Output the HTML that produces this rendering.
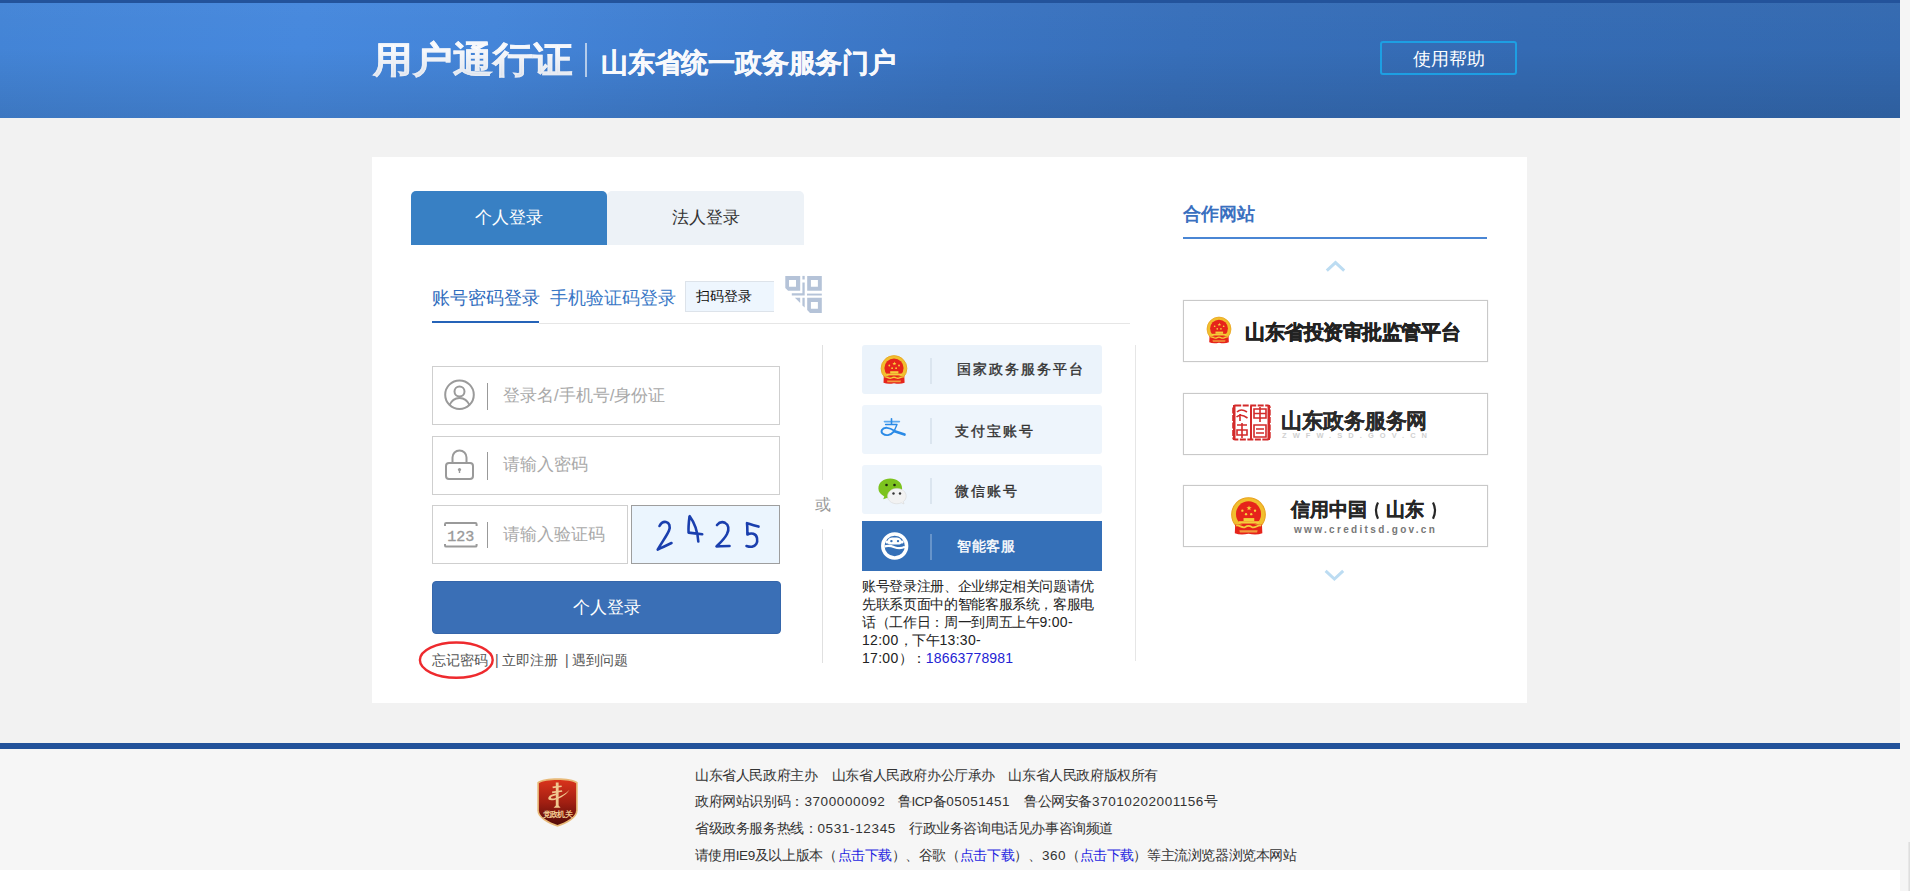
<!DOCTYPE html>
<html><head><meta charset="utf-8">
<style>
*{margin:0;padding:0;box-sizing:border-box}
html,body{width:1910px;height:891px;overflow:hidden;background:#f5f5f5;font-family:"Liberation Sans",sans-serif}
.abs{position:absolute}
#page{position:absolute;left:0;top:0;width:1900px;height:891px;background:#f2f2f2}
#hdr{position:absolute;left:0;top:0;width:1900px;height:118px;background:linear-gradient(to bottom,rgba(255,255,255,0.02),rgba(0,0,0,0.0) 40%,rgba(0,0,0,0.1)),linear-gradient(97deg,#4384d6 0%,#4688dd 16%,#4485d9 26%,#3e7bcc 40%,#3a74c2 50%,#376fba 62%,#346bb4 80%,#3369b0 100%)}
#hdrtop{position:absolute;left:0;top:0;width:1900px;height:3px;background:#23539b}
.t1{position:absolute;left:373px;top:34px;font-size:39.5px;transform-origin:0 50%;transform:scaleY(0.91);font-weight:bold;color:#eef2f8;background:linear-gradient(to bottom,#ffffff 25%,#d9e0ea 85%);-webkit-background-clip:text;background-clip:text;-webkit-text-fill-color:transparent;-webkit-text-stroke:0.7px rgba(238,242,248,0.6);line-height:50px;white-space:nowrap}
.sep{position:absolute;left:585px;top:43px;width:2px;height:34px;background:rgba(230,236,245,0.7)}
.t2{position:absolute;left:601px;top:46px;font-size:26.5px;letter-spacing:-0.2px;font-weight:bold;color:#f8f9fc;-webkit-text-stroke:0.35px #f8f9fc;line-height:34px;white-space:nowrap}
.help{position:absolute;left:1380px;top:41px;width:137px;height:34px;border:2px solid #1d9fe3;border-radius:3px;color:#fff;font-size:18px;line-height:32px;text-align:center}
#card{position:absolute;left:372px;top:157px;width:1155px;height:546px;background:#fff}
.tab{position:absolute;top:191px;height:54px;width:196px;border-radius:5px 5px 0 0;font-size:17px;line-height:54px;text-align:center}
.inp{position:absolute;left:432px;width:348px;border:1px solid #cfcfcf;background:#fff}
.lk{position:absolute;top:650px;font-size:14px;line-height:20px;color:#555;white-space:nowrap}
.vsep{position:absolute;left:487px;width:1px;background:#999}
.ph{position:absolute;left:503px;font-size:17px;line-height:24px;color:#a9a9a9;white-space:nowrap}
.tp{position:absolute;left:862px;width:240px;height:49px;background:#ebf3fb;border-radius:3px}
.tsep{position:absolute;left:68px;top:12.5px;width:2px;height:26px;background:#dbe5ef}
.tt{position:absolute;left:95px;top:14px;font-size:14px;line-height:20px;letter-spacing:2px;-webkit-text-stroke:0.4px;color:#333;white-space:nowrap}
.pbox{position:absolute;left:1183px;width:305px;height:62px;border:1px solid #c9c9c9;box-shadow:0 0 1px #dcdcdc;background:#fff}
.fs{position:absolute;font-size:13.5px;letter-spacing:-0.4px;line-height:20px;color:#333;white-space:nowrap}
.dg{letter-spacing:0.3px}
.fb{color:#1f1fe0}
#foot{position:absolute;left:0;top:743px;width:1900px;height:127px;background:#f6f6f6;border-top:6px solid #22529a}
#foot .ln{position:absolute;left:695px;font-size:13px;color:#333;white-space:nowrap;line-height:16px}
#bot{position:absolute;left:0;top:870px;width:1900px;height:21px;background:#fff}
</style></head><body>
<svg width="0" height="0" style="position:absolute"><defs>
<g id="emblem">
  <circle cx="18" cy="16.5" r="12.9" fill="#f1bf2e"/>
  <circle cx="18" cy="16.5" r="12.9" fill="none" stroke="#e9a21f" stroke-width="0.8"/>
  <circle cx="18" cy="16" r="9.6" fill="#e6241b"/>
  <path d="M18.4 9.6L18.9 11L20.4 11L19.2 11.9L19.6 13.3L18.4 12.5L17.2 13.3L17.6 11.9L16.4 11L17.9 11Z" fill="#f7d23a"/>
  <circle cx="13.3" cy="13.5" r="0.9" fill="#f7d23a"/><circle cx="23" cy="13.5" r="0.9" fill="#f7d23a"/>
  <circle cx="16.1" cy="16.2" r="0.9" fill="#f7d23a"/><circle cx="20.1" cy="16.2" r="0.9" fill="#f7d23a"/>
  <rect x="14.2" y="19.2" width="8.2" height="2.4" fill="#f4cd3a"/>
  <rect x="10.5" y="21.6" width="15.5" height="1.8" fill="#f4cd3a"/>
  <path d="M7.8 24.2H28.3L28.6 30.8Q24 32.6 18 31.2Q12 32.6 7.5 30.8Z" fill="#e6241b"/>
  <path d="M8.5 25C11 24 13 27.5 15.5 26C17 25 19 25 20.5 26C23 27.5 25 24 27.8 25" fill="none" stroke="#f4cd3a" stroke-width="1.4"/>
  <path d="M11 28.6H25L24.6 30.2H11.4Z" fill="#f19a3e"/>
</g>
</defs></svg>
<div id="page">
  <div id="hdr"></div>
  <div id="hdrtop"></div>
  <div class="t1">用户通行证</div>
  <div class="sep"></div>
  <div class="t2">山东省统一政务服务门户</div>
  <div class="help">使用帮助</div>

  <div id="card"></div>
  <div class="tab" style="left:411px;background:#3880c4;color:#fff">个人登录</div>
  <div class="tab" style="left:607px;width:197px;background:#edf2f7;color:#333">法人登录</div>


  <!-- subtabs -->
  <div class="abs" style="left:432px;top:285px;font-size:18px;line-height:26px;color:#2f6cbd;white-space:nowrap">账号密码登录</div>
  <div class="abs" style="left:550px;top:285px;font-size:18px;line-height:26px;color:#3a78c6;white-space:nowrap">手机验证码登录</div>
  <div class="abs" style="left:685px;top:281px;width:89px;height:31px;background:#eef6fe;border:1px solid #dde3ea;border-right:none;font-size:14px;line-height:29px;padding-left:10px;color:#111;white-space:nowrap">扫码登录</div>
  <svg class="abs" style="left:780px;top:270px" width="50" height="50" viewBox="0 0 50 50">
    <g fill="#b5c3d8">
      <path d="M5.3 5.9H20.2V20.8H8.1L5.3 18Z M9 10.1V16.8H16V10.1Z" fill-rule="evenodd"/>
      <path d="M27.2 5.9H41.8V20.8H27.2Z M30.9 10.1V16.8H37.9V10.1Z" fill-rule="evenodd"/>
      <rect x="22.4" y="5.9" width="2.3" height="3.6"/>
      <path d="M22.4 12.6H24.7V25.5H11.8V23.3H22.4Z"/>
      <rect x="27" y="23.6" width="14.8" height="1.9"/>
      <path d="M14.9 27.8H20.2V33.1Z"/>
      <path d="M22.4 27.8H24.7V37.6L22.4 35.5Z"/>
      <path d="M27.2 27.8H41.8V42.9H30L27.2 40Z M30.9 32V38.7H37.9V32Z" fill-rule="evenodd"/>
    </g>
  </svg>
  <div class="abs" style="left:432px;top:321px;width:107px;height:2px;background:#2563b8"></div>
  <div class="abs" style="left:539px;top:323px;width:591px;height:1px;background:#e6e6e6"></div>

  <!-- inputs -->
  <div class="inp" style="top:366px;height:59px"></div>
  <div class="inp" style="top:436px;height:59px"></div>
  <div class="inp" style="top:505px;width:196px;height:59px"></div>
  <div class="vsep" style="top:383px;height:27px"></div>
  <div class="vsep" style="top:452px;height:28px"></div>
  <div class="vsep" style="top:522px;height:26px"></div>
  <div class="ph" style="top:383.5px">登录名/手机号/身份证</div>
  <div class="ph" style="top:453px">请输入密码</div>
  <div class="ph" style="top:522.5px">请输入验证码</div>
  <svg class="abs" style="left:442px;top:377px" width="36" height="36" viewBox="0 0 36 36">
    <circle cx="17.5" cy="17.7" r="14.3" fill="none" stroke="#9a9a9a" stroke-width="2"/>
    <circle cx="17.5" cy="14.6" r="5" fill="none" stroke="#9a9a9a" stroke-width="2"/>
    <path d="M7.6 28.2C9.5 23.5 13 21 17.5 21C22 21 25.5 23.5 27.4 28.2" fill="none" stroke="#9a9a9a" stroke-width="2"/>
  </svg>
  <svg class="abs" style="left:442px;top:446px" width="36" height="36" viewBox="0 0 36 36">
    <path d="M10.5 17V11.5C10.5 7.3 13.6 4.6 17.5 4.6C21.4 4.6 24.5 7.3 24.5 11.5V17" fill="none" stroke="#9a9a9a" stroke-width="2"/>
    <rect x="4" y="17" width="27" height="16" rx="3" fill="none" stroke="#9a9a9a" stroke-width="2"/>
    <circle cx="17.5" cy="23.6" r="1.6" fill="#9a9a9a"/>
    <rect x="16.8" y="24" width="1.4" height="3" fill="#9a9a9a"/>
  </svg>
  <svg class="abs" style="left:442px;top:520px" width="38" height="30" viewBox="0 0 38 30">
    <path d="M3 6V4.2Q3 3 4.2 3H33.4Q34.6 3 34.6 4.2V6" fill="none" stroke="#9a9a9a" stroke-width="2"/>
    <path d="M3 24V25.4Q3 26.6 4.2 26.6H33.4Q34.6 26.6 34.6 25.4V24" fill="none" stroke="#9a9a9a" stroke-width="2"/>
    <text x="18.8" y="20.6" text-anchor="middle" font-family="Liberation Mono" font-size="15" fill="#999" stroke="#999" stroke-width="0.35">123</text>
  </svg>
  <div class="abs" style="left:631px;top:505px;width:149px;height:59px;background:#ebf5fe;border:1px solid #9e9e9e"></div>
  <svg class="abs" style="left:631px;top:505px" width="149" height="59" viewBox="0 0 149 59">
    <g fill="none" stroke="#1a3fae" stroke-width="2.6" stroke-linecap="round" stroke-linejoin="round">
      <path d="M28.5 21C30 18 32.5 16.6 35 17C38.5 17.7 39.5 21.5 38 25.5C36 30.5 31 37 26.7 44.6C31 42.5 36 40 40.5 38"/>
      <path d="M58.5 11.5C57.7 18 57.3 23.5 57.6 27.6C62 28 66.5 28.6 71.2 29.3 M58.7 11.2C63 17 66.5 24 67.3 36.5"/>
      <path d="M86 20C88.5 17 91.5 16.7 94 17.8C97.5 19.5 98.5 24 96 29C93.5 34 89 38 85.5 41.4C90 41.2 94.5 41 98.5 41"/>
      <path d="M127.5 21.6C124 20.5 120 19.5 116 18.2C116.5 22.5 116.3 26 116.4 29.5C120.5 27.5 125 28.5 126 33C127 38 124.5 41 121 41.7C119 42 117 41.5 115.5 41"/>
    </g>
  </svg>
  <div class="abs" style="left:432px;top:581px;width:349px;height:53px;background:#3a6fb6;border:1px solid #3566ab;border-radius:4px;color:#fff;font-size:17px;line-height:51px;text-align:center">个人登录</div>
  <div class="lk" style="left:432px">忘记密码</div><div class="lk" style="left:495px">|</div><div class="lk" style="left:502px">立即注册</div><div class="lk" style="left:565px">|</div><div class="lk" style="left:572px">遇到问题</div>
  <svg class="abs" style="left:415px;top:638px" width="84" height="44" viewBox="0 0 84 44">
    <ellipse cx="41.3" cy="22.1" rx="36.4" ry="17.6" fill="none" stroke="#ee2a2e" stroke-width="2.4"/>
  </svg>

  <!-- middle column -->
  <div class="abs" style="left:822px;top:345px;width:1px;height:135px;background:#e0e0e0"></div>
  <div class="abs" style="left:822px;top:529px;width:1px;height:134px;background:#e0e0e0"></div>
  <div class="abs" style="left:815px;top:493.5px;font-size:16px;line-height:22px;color:#999">或</div>
  <div class="abs" style="left:1135px;top:345px;width:1px;height:316px;background:#e6e6e6"></div>

  <div class="tp" style="top:345px"><div class="tsep"></div><div class="tt">国家政务服务平台</div></div>
  <div class="tp" style="top:405px;background:#eef5fc"><div class="tsep"></div><div class="tt" style="left:93px;top:15.5px">支付宝账号</div></div>
  <div class="tp" style="top:465px;background:#eef5fc"><div class="tsep"></div><div class="tt" style="left:93px;top:15.5px">微信账号</div></div>
  <div class="tp" style="top:521px;background:#3570b8;border-radius:0;height:50px"><div class="tsep" style="background:rgba(255,255,255,0.25)"></div><div class="tt" style="color:#fff;letter-spacing:0.6px;top:15px">智能客服</div></div>

  <svg class="abs" style="left:876px;top:351.5px" width="36" height="36" viewBox="0 0 36 36"><use href="#emblem"/></svg>
  <svg class="abs" style="left:876px;top:412px" width="36" height="30" viewBox="0 0 36 30">
    <g fill="none" stroke="#2a8ae6" stroke-linecap="round" stroke-linejoin="round">
      <path d="M8.4 9.6H23.4" stroke="#5fabf0" stroke-width="1.6"/>
      <path d="M15.5 6.8V11.8" stroke-width="1.6"/>
      <path d="M9.6 12.5H21L18.3 18.8" stroke-width="1.4"/>
      <path d="M18.3 18.8C13.5 15.5 8 14.5 5.9 18C4.4 21 8 23.6 12 23.1C15 22.6 17 20.8 18.3 19.2" stroke-width="1.9"/>
      <path d="M18.6 19.2L28.5 22.6" stroke-width="2.6"/>
    </g>
  </svg>
  <svg class="abs" style="left:876px;top:472px" width="36" height="36" viewBox="0 0 36 36">
    <path d="M14.2 6.6C20.6 6.6 26.1 10.3 26.1 16.5C26.1 22.7 20.6 26.4 14.2 26.4C13 26.4 11.8 26.2 10.8 26L7.2 27.2L8.3 24.4C4.7 22.5 2.4 19.9 2.4 16.5C2.4 10.3 7.8 6.6 14.2 6.6Z" fill="#7cc31e"/>
    <circle cx="10.5" cy="13" r="1.3" fill="#1d2a10"/><circle cx="18.5" cy="13" r="1.3" fill="#1d2a10"/>
    <path d="M20.9 16.4C26 16.4 30.2 19.8 30.2 24.2C30.2 26.4 29.1 28.3 27.3 29.6L28 32L25.3 30.8C23.9 31.3 22.4 31.8 20.9 31.8C15.8 31.8 11.6 28.6 11.6 24.2C11.6 19.8 15.8 16.4 20.9 16.4Z" fill="#f2f2f2" stroke="#d8d8d8" stroke-width="0.6"/>
    <circle cx="17.5" cy="21.5" r="1.2" fill="#333"/><circle cx="24" cy="21.5" r="1.2" fill="#333"/>
  </svg>
  <svg class="abs" style="left:876px;top:528px" width="36" height="36" viewBox="0 0 36 36">
    <circle cx="18.7" cy="18" r="11.9" fill="none" stroke="#fff" stroke-width="3.5"/>
    <path d="M12 12.5C12 10 15 9.6 18.5 9.6C22 9.6 25 10 25 12.5C27 12.5 28 13 27.6 14.5C27.3 15.5 26 15.6 25 15.6C24.6 17 22 16.6 18.5 16.4C15 16.6 12.4 17 12 15.6C11 15.6 9.7 15.5 9.4 14.5C9 13 10 12.5 12 12.5Z" fill="#fff"/>
    <circle cx="15.4" cy="13.1" r="1.2" fill="#3570b8"/><circle cx="22" cy="13.1" r="1.2" fill="#3570b8"/>
    <path d="M8.5 18.5C12 17.2 15 17.8 18.5 19.2C22 20.5 25.5 20.6 29 18.8" fill="none" stroke="#fff" stroke-width="2.2"/>
  </svg>

  <div class="abs" style="left:862px;top:577px;width:250px;font-size:14px;line-height:18px;letter-spacing:-0.35px;color:#222">账号登录注册、企业绑定相关问题请优<br>先联系页面中的智能客服系统，客服电<br>话（工作日：周一到周五上午<span class="dg">9:00-</span><br><span class="dg">12:00</span>，下午<span class="dg">13:30-</span><br><span class="dg">17:00</span>）：<span class="dg" style="color:#2323d4;letter-spacing:0.15px">18663778981</span></div>

  <!-- right column -->
  <div class="abs" style="left:1183px;top:201px;font-size:18px;line-height:26px;font-weight:bold;color:#3a70bf;white-space:nowrap">合作网站</div>
  <div class="abs" style="left:1183px;top:237px;width:304px;height:2px;background:#4a86d4"></div>
  <svg class="abs" style="left:1310px;top:250px" width="50" height="30" viewBox="0 0 50 30"><polyline points="16.8,20.6 25.5,12.6 34.2,20.6" fill="none" stroke="#bcdcf2" stroke-width="3"/></svg>
  <svg class="abs" style="left:1310px;top:560px" width="50" height="30" viewBox="0 0 50 30"><polyline points="15.6,10.8 24.4,19 33.2,10.8" fill="none" stroke="#bcdcf2" stroke-width="3"/></svg>
  <div class="pbox" style="top:300px"></div>
  <div class="pbox" style="top:393px"></div>
  <div class="pbox" style="top:485px"></div>
  <svg class="abs" style="left:1201px;top:312px" width="36" height="36" viewBox="0 0 36 36"><g transform="translate(18 18) scale(0.93) translate(-18 -17.5)"><use href="#emblem"/></g></svg>
  <div class="abs" style="left:1245px;top:317px;font-size:20px;line-height:30px;font-weight:bold;-webkit-text-stroke:0.6px #222;color:#222;letter-spacing:-0.45px;white-space:nowrap">山东省投资审批监管平台</div>

  <svg class="abs" style="left:1232px;top:404px" width="40" height="37" viewBox="0 0 40 37">
    <g fill="none" stroke="#d32a2a" stroke-width="2">
      <rect x="1.2" y="1.4" width="36.5" height="34" rx="2" stroke-dasharray="6 1.5"/>
    </g>
    <g fill="#d32a2a">
      <rect x="1" y="1" width="2.5" height="35"/><rect x="35.5" y="1" width="2.5" height="35"/>
      <rect x="18" y="2" width="2" height="33"/>
    </g>
    <g fill="none" stroke="#d32a2a" stroke-width="1.6">
      <path d="M5 8Q9 4 15 8M4.5 13Q9 9 15.5 14M8 10V17"/>
      <path d="M5 21H15M10 19V34M5 26H15V31H5Z"/>
      <path d="M22 5H34V14H22ZM22 9.5H34M28 3V18"/>
      <path d="M22 21H34V33H22ZM24 25H32M24 29H32"/>
    </g>
  </svg>
  <div class="abs" style="left:1281px;top:405.5px;font-size:21px;line-height:30px;font-weight:bold;-webkit-text-stroke:0.2px #2a2a2a;color:#2a2a2a;letter-spacing:-0.1px;white-space:nowrap">山东政务服务网</div>
  <div class="abs" style="left:1282px;top:431px;font-size:7.5px;line-height:10px;font-weight:bold;color:#d0d0d0;letter-spacing:6.05px;white-space:nowrap">ZWFW.SD.GOV.CN</div>

  <svg class="abs" style="left:1225.3px;top:493px" width="47" height="47" viewBox="0 0 36 36"><use href="#emblem"/></svg>
  <div class="abs" style="left:1291px;top:496px;font-size:19px;line-height:28px;font-weight:bold;-webkit-text-stroke:0.3px #262626;color:#262626;white-space:nowrap">信用中国</div>
  <div class="abs" style="left:1385.5px;top:496px;font-size:19px;line-height:28px;font-weight:bold;-webkit-text-stroke:0.3px #262626;color:#262626;white-space:nowrap">山东</div>
  <svg class="abs" style="left:1370px;top:500px" width="70" height="22" viewBox="0 0 70 22"><g fill="none" stroke="#262626" stroke-width="2.2"><path d="M8 2.5Q4 10.5 8 18.8"/><path d="M63 2.5Q67 10.5 63 18.8"/></g></svg>
  <div class="abs" style="left:1294px;top:522.5px;font-size:10px;line-height:14px;font-weight:bold;color:#777;letter-spacing:2.33px;white-space:nowrap">www.creditsd.gov.cn</div>
  <div id="foot"></div>
  <div id="f0" class="fs" style="left:695.0px;top:766.2px">山东省人民政府主办</div>
  <div id="f1" class="fs" style="left:831.8px;top:766.2px">山东省人民政府办公厅承办</div>
  <div id="f2" class="fs" style="left:1008.4px;top:766.2px">山东省人民政府版权所有</div>
  <div id="f3" class="fs" style="left:695.0px;top:792.4px">政府网站识别码：</div>
  <div id="f4" class="fs" style="left:804.4px;top:792.4px"><span style="letter-spacing:0.6px">3700000092</span></div>
  <div id="f5" class="fs" style="left:897.8px;top:792.4px">鲁ICP备<span style="letter-spacing:0.45px">05051451</span></div>
  <div id="f6" class="fs" style="left:1024.1px;top:792.4px">鲁公网安备<span style="letter-spacing:0.55px">37010202001156</span>号</div>
  <div id="f7" class="fs" style="left:695.0px;top:819.2px">省级政务服务热线：</div>
  <div id="f8" class="fs" style="left:817.4px;top:819.2px"><span style="letter-spacing:0.65px">0531-12345</span></div>
  <div id="f9" class="fs" style="left:909.1px;top:819.2px">行政业务咨询电话见办事咨询频道</div>
  <div id="f10" class="fs" style="left:694.9px;top:846.3px">请使用IE9及以上版本</div>
  <div id="f11" class="fs" style="left:823.0px;top:846.3px">（</div>
  <div id="f12" class="fs" style="left:837.5px;top:846.3px"><span class="fb">点击下载</span></div>
  <div id="f13" class="fs" style="left:891.7px;top:846.3px">）</div>
  <div id="f14" class="fs" style="left:904.5px;top:846.3px">、</div>
  <div id="f15" class="fs" style="left:918.5px;top:846.3px">谷歌</div>
  <div id="f16" class="fs" style="left:946.4px;top:846.3px">（</div>
  <div id="f17" class="fs" style="left:959.8px;top:846.3px"><span class="fb">点击下载</span></div>
  <div id="f18" class="fs" style="left:1014.0px;top:846.3px">）</div>
  <div id="f19" class="fs" style="left:1027.5px;top:846.3px">、</div>
  <div id="f20" class="fs" style="left:1042.0px;top:846.3px"><span style="letter-spacing:0.5px">360</span></div>
  <div id="f21" class="fs" style="left:1066.2px;top:846.3px">（</div>
  <div id="f22" class="fs" style="left:1079.7px;top:846.3px"><span class="fb">点击下载</span></div>
  <div id="f23" class="fs" style="left:1133.0px;top:846.3px">）</div>
  <div id="f24" class="fs" style="left:1147.0px;top:846.3px">等主流浏览器浏览本网站</div>
  <svg class="abs" style="left:532px;top:774px" width="50" height="56" viewBox="0 0 50 56">
    <defs><linearGradient id="shg" x1="0" y1="0" x2="0" y2="1"><stop offset="0" stop-color="#d9331b"/><stop offset="0.5" stop-color="#a11f12"/><stop offset="1" stop-color="#520b08"/></linearGradient></defs>
    <path d="M5.3 8.2C12 3 39 3 45.7 8.2V36.5C45.7 44 35 49.5 25.5 52.8C16 49.5 5.3 44 5.3 36.5Z" fill="#e8b978"/>
    <path d="M6.9 9.3C13 5 38 5 44.1 9.3V36.2C44.1 43 34 48 25.5 51C17 48 6.9 43 6.9 36.2Z" fill="url(#shg)"/>
    <g fill="#f0c88f">
      <path d="M23.8 8.5H26.6V31.5L28.6 33.8H21.6L23.8 31.5Z"/>
      <path d="M20.5 12.6L29.5 11.5L29.8 13L20.8 14.2Z"/>
      <path d="M20 17.6L30 16.2L30.3 17.8L20.3 19.2Z"/>
      <path d="M37.5 15.8C35 20 29 24.5 22.5 26C17.5 27 15.5 25.5 16.5 23.3C17.5 21 21 19.8 24 19.5L24 21.2C21.5 21.6 19.3 22.5 19 23.4C18.7 24.5 20.5 24.8 23 24.2C28.5 22.8 34 19.5 37.5 15.8Z"/>
    </g>
    <text x="25.5" y="43" text-anchor="middle" font-size="8.2" font-weight="bold" fill="#f0c88f" font-family="Liberation Sans" letter-spacing="-0.6">党政机关</text>
  </svg>
  <div id="bot"></div>
  <div class="abs" style="left:1908px;top:842px;width:2px;height:49px;background:linear-gradient(to right,#ececec,#d9d9d9)"></div>
</div>
</body></html>
